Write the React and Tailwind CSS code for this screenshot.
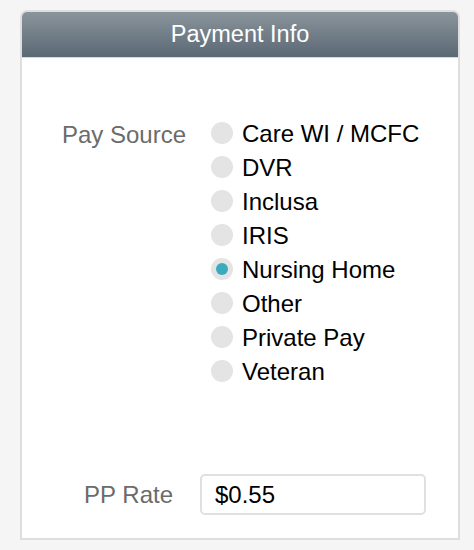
import React from "react";

const options = [
  "Care WI / MCFC",
  "DVR",
  "Inclusa",
  "IRIS",
  "Nursing Home",
  "Other",
  "Private Pay",
  "Veteran",
];

function Radio({ checked }) {
  return (
    <span className="flex h-[22px] w-[22px] shrink-0 items-center justify-center rounded-full bg-[#e4e4e4]">
      {checked && <span className="h-[12px] w-[12px] rounded-full bg-[#3aaabd]" />}
    </span>
  );
}

export default function App() {
  return (
    <div
      className="min-h-[550px] w-[474px] bg-[#f5f5f5] pt-[10px] pl-[20px]"
      style={{ fontFamily: '"Liberation Sans", Arial, sans-serif' }}
    >
      <div className="flex h-[530px] w-[440px] flex-col rounded-t-[7px] border-2 border-[#dedede] bg-white">
        <div className="flex h-[46px] items-center justify-center rounded-t-[5px] bg-gradient-to-b from-[#8a949b] to-[#5b6975] border-b border-[#d8d8d8] pt-[1px] text-[23.5px] text-white">
          Payment Info
        </div>
        <div className="flex flex-1 flex-col pt-[58px]">
          <div className="flex">
            <div className="w-[164px] pt-[6px] text-right text-[24px] leading-[26px] text-[#6b6b6b]">
              Pay Source
            </div>
            <div className="ml-[25px] flex flex-col">
              {options.map((o) => (
                <div key={o} className="flex h-[34px] items-center">
                  <Radio checked={o === "Nursing Home"} />
                  <span className="ml-[9px] pt-[2px] text-[24px] leading-[26px] text-black">{o}</span>
                </div>
              ))}
            </div>
          </div>
          <div className="mt-[86px] flex items-center">
            <div className="w-[151px] pt-[1px] text-right text-[24px] text-[#6b6b6b]">PP Rate</div>
            <div className="ml-[27px] flex h-[41px] w-[226px] items-center rounded-[5px] border-2 border-[#e0e0e0] pl-[13px] pt-[1px] text-[24px] text-black">
              $0.55
            </div>
          </div>
        </div>
      </div>
    </div>
  );
}
